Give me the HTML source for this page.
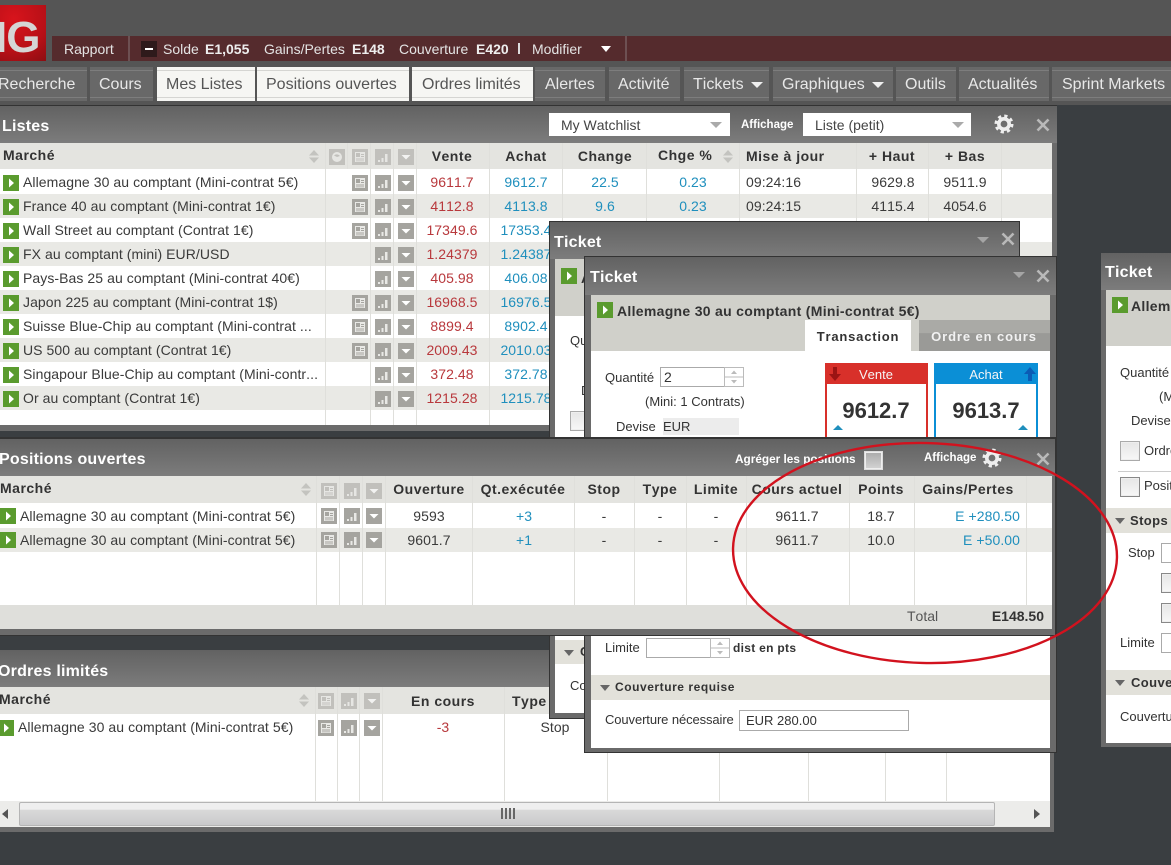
<!DOCTYPE html>
<html><head><meta charset="utf-8"><style>
html,body{margin:0;padding:0;width:1171px;height:865px;overflow:hidden;background:#3a3e41}
body{position:relative;font:13px "Liberation Sans",sans-serif;color:#333;font-kerning:none}
.b{position:absolute}
.t{position:absolute;line-height:16px;white-space:nowrap}
.c{transform:translateX(-50%)}
.r{transform:translateX(-100%)}
.m{font-size:14px;letter-spacing:.07px;color:#3a3a3a}
.h{font-weight:bold;font-size:14px;letter-spacing:.5px;color:#333}
.tt{font-weight:bold;font-size:16px;color:#fff;letter-spacing:.2px;margin-top:4px}
.n{font-size:16px;color:#e8e8e8;margin-top:1px}
.nb{position:absolute;top:67px;height:34px;background:#686868}
.nb:before,.nb:after{content:"";position:absolute;left:0;right:0;height:1px;background:#7d7d7d}
.nb:before{top:3px}.nb:after{bottom:3px}
.na{position:absolute;top:67px;height:34px;background:#f6f6f3}
.na:before,.na:after{content:"";position:absolute;left:0;right:0;height:1px;background:#d5d5d2}
.na:before{top:3px}.na:after{bottom:3px}
.tb{background:linear-gradient(#626262,#7c7c7c)}
.v{position:absolute;width:1px;background:#dfdfdb}
.m.red,.red{color:#b8383c}.m.blue,.blue{color:#1f8fbd}
.i{position:absolute;width:16px;height:16px;overflow:visible}
.l{opacity:.55}
.in{position:absolute;border:1px solid #aaa;background:#fff;box-sizing:border-box}
.cb{position:absolute;border:1px solid #aaa;background:linear-gradient(#e6e6e6,#f7f7f7);box-shadow:inset 0 0 0 1px #eee;box-sizing:border-box}
.tri{position:absolute;width:0;height:0;border-left:5px solid transparent;border-right:5px solid transparent;border-top:6px solid #666}
</style></head><body>
<svg width="0" height="0" style="position:absolute"><defs>
<symbol id="play" viewBox="0 0 16 16"><rect width="16" height="16" fill="#5a9b2e"/><path d="M6 3.500L11 8L6 12.500Z" fill="#fff"/></symbol>
<symbol id="news" viewBox="0 0 16 16"><rect width="16" height="16" fill="#a5a49f"/><path d="M3 3H13V13H3Z M4 4V8H8V4Z M9 5H12V6H9Z M9 7H12V8H9Z M4 9.500H12V10.500H4Z M4 11.500H12V12.300H4Z" fill="#e9e9e6" fill-rule="evenodd"/></symbol>
<symbol id="bars" viewBox="0 0 16 16"><rect width="16" height="16" fill="#a5a49f"/><path d="M3 11H5V13H3Z M6.500 9H8.500V13H6.500Z M10 5H12.500V13H10Z" fill="#e9e9e6"/></symbol>
<symbol id="drop" viewBox="0 0 16 16"><rect width="16" height="16" fill="#a5a49f"/><path d="M3.500 6H12.500L8 10.500Z" fill="#fff"/></symbol>
<symbol id="clk" viewBox="0 0 16 16"><rect width="16" height="16" fill="#a5a49f"/><circle cx="8" cy="8" r="5" fill="#e9e9e6"/><path d="M5 6.500A4 4 0 0 1 11 7L8 8Z" fill="#a5a49f"/></symbol>
<symbol id="sort" viewBox="0 0 12 15"><path d="M1 6.500L6 1L11 6.500Z M1 8.500H11L6 14Z" fill="#c3c3bf"/></symbol>
<symbol id="gear" viewBox="0 0 20 20"><circle cx="10" cy="10" r="5.200" fill="none" stroke="#eee" stroke-width="3.600"/><circle cx="10" cy="10" r="8" fill="none" stroke="#eee" stroke-width="3" stroke-dasharray="3.200 3.083"/></symbol>
<symbol id="x" viewBox="0 0 14 14"><path d="M1.500 1.500L12.500 12.500M12.500 1.500L1.500 12.500" stroke="#b9b9b9" stroke-width="2.600" fill="none"/></symbol>
<symbol id="spin" viewBox="0 0 20 20"><rect x=".5" y=".5" width="19" height="19" fill="#fff" stroke="#bbb"/><path d="M.5 10H19.500" stroke="#bbb"/><path d="M7 7L10 3.500L13 7Z M7 13H13L10 16.500Z" fill="#bbb"/></symbol>
</defs></svg>

<!-- HEADER -->
<div class="b" style="left:0;top:0;width:1171px;height:105px;background:#555"></div>
<div class="b" style="left:0;top:5px;width:46px;height:56px;overflow:hidden;background:radial-gradient(circle at 30% 25%,#d8141c,#b81017 60%,#8c0d12)"><div class="t" style="left:-5px;top:8px;line-height:50px;font-size:44px;font-weight:bold;color:#d5d5d5;letter-spacing:-1px">IG</div></div>
<div class="b" style="left:52px;top:36px;width:1119px;height:25px;background:#552b2d"></div>
<div class="b" style="left:128px;top:36px;width:2px;height:25px;background:#6d5052"></div>
<div class="b" style="left:625px;top:36px;width:2px;height:25px;background:#6d5052"></div>
<div class="t" style="left:64px;top:41px;font-size:14px;color:#e4e4e4">Rapport</div>
<div class="b" style="left:141px;top:41px;width:16px;height:16px;background:#2e1a1b"></div>
<div class="b" style="left:145px;top:48px;width:8px;height:2px;background:#fff"></div>
<div class="t" style="left:163px;top:41px;font-size:14px;color:#e4e4e4">Solde</div>
<div class="t" style="left:205px;top:41px;font-size:14px;font-weight:bold;color:#eee">E1,055</div>
<div class="t" style="left:264px;top:41px;font-size:14px;color:#e4e4e4">Gains/Pertes</div>
<div class="t" style="left:352px;top:41px;font-size:14px;font-weight:bold;color:#eee">E148</div>
<div class="t" style="left:399px;top:41px;font-size:14px;color:#e4e4e4">Couverture</div>
<div class="t" style="left:476px;top:41px;font-size:14px;font-weight:bold;color:#eee">E420</div>
<div class="b" style="left:518px;top:43px;width:2px;height:11px;background:#ddd"></div>
<div class="t" style="left:532px;top:41px;font-size:14px;color:#e4e4e4">Modifier</div>
<div class="tri" style="left:601px;top:46px;border-top-color:#fff"></div>

<div class="nb" style="left:-5px;width:92px"></div><div class="t n" style="left:-2px;top:76px">Recherche</div>
<div class="nb" style="left:90px;width:63px"></div><div class="t n" style="left:99px;top:76px">Cours</div>
<div class="na" style="left:157px;width:98px"></div><div class="t n" style="left:166px;top:76px;color:#555">Mes Listes</div>
<div class="na" style="left:257px;width:152px"></div><div class="t n" style="left:266px;top:76px;color:#555">Positions ouvertes</div>
<div class="na" style="left:412px;width:121px"></div><div class="t n" style="left:422px;top:76px;color:#555">Ordres limités</div>
<div class="nb" style="left:535px;width:70px"></div><div class="t n" style="left:545px;top:76px">Alertes</div>
<div class="nb" style="left:609px;width:71px"></div><div class="t n" style="left:618px;top:76px">Activité</div>
<div class="nb" style="left:684px;width:85px"></div><div class="t n" style="left:693px;top:76px">Tickets</div><div class="tri" style="left:751px;top:82px;border-top-color:#eee;border-left-width:6px;border-right-width:6px"></div>
<div class="nb" style="left:773px;width:120px"></div><div class="t n" style="left:782px;top:76px">Graphiques</div><div class="tri" style="left:872px;top:82px;border-top-color:#eee;border-left-width:6px;border-right-width:6px"></div>
<div class="nb" style="left:896px;width:60px"></div><div class="t n" style="left:905px;top:76px">Outils</div>
<div class="nb" style="left:959px;width:90px"></div><div class="t n" style="left:968px;top:76px">Actualités</div>
<div class="nb" style="left:1052px;width:125px"></div><div class="t n" style="left:1062px;top:76px">Sprint Markets</div>

<!-- LISTES WINDOW -->
<div class="b" style="left:0;top:105px;width:1057px;height:1px;background:#333"></div>
<div class="b tb" style="left:0;top:106px;width:1057px;height:37px"></div>
<div class="b" style="left:0;top:143px;width:1057px;height:288px;background:#6b6b6b"></div>
<div class="b" style="left:0;top:143px;width:1052px;height:282px;background:#fff"></div>
<div class="b" style="left:0;top:143px;width:1052px;height:26px;background:#e4e4e0"></div>
<div class="b" style="left:0;top:194px;width:1052px;height:24px;background:#e9e9e5"></div>
<div class="b" style="left:0;top:242px;width:1052px;height:24px;background:#e9e9e5"></div>
<div class="b" style="left:0;top:290px;width:1052px;height:24px;background:#e9e9e5"></div>
<div class="b" style="left:0;top:338px;width:1052px;height:24px;background:#e9e9e5"></div>
<div class="b" style="left:0;top:386px;width:1052px;height:24px;background:#e9e9e5"></div>
<div class="v" style="left:325px;top:143px;height:282px"></div>
<div class="v" style="left:347px;top:143px;height:26px"></div>
<div class="v" style="left:370px;top:143px;height:282px"></div>
<div class="v" style="left:393px;top:143px;height:282px"></div>
<div class="v" style="left:416px;top:143px;height:282px"></div>
<div class="v" style="left:489px;top:143px;height:282px"></div>
<div class="v" style="left:562px;top:143px;height:282px"></div>
<div class="v" style="left:646px;top:143px;height:282px"></div>
<div class="v" style="left:739px;top:143px;height:282px"></div>
<div class="v" style="left:856px;top:143px;height:282px"></div>
<div class="v" style="left:928px;top:143px;height:282px"></div>
<div class="v" style="left:1001px;top:143px;height:282px"></div>

<div class="t tt" style="left:2px;top:115px">Listes</div>
<div class="b" style="left:549px;top:113px;width:181px;height:23px;background:#fff"></div>
<div class="t" style="left:561px;top:117px;color:#444;font-size:14px">My Watchlist</div>
<div class="tri" style="left:710px;top:122px;border-top-color:#aaa;border-left-width:6px;border-right-width:6px"></div>
<div class="t" style="left:741px;top:117px;font-size:11.500px;font-weight:bold;color:#fff">Affichage</div>
<div class="b" style="left:803px;top:113px;width:168px;height:23px;background:#fff"></div>
<div class="t" style="left:815px;top:117px;color:#444;font-size:14px">Liste (petit)</div>
<div class="tri" style="left:952px;top:122px;border-top-color:#aaa;border-left-width:6px;border-right-width:6px"></div>
<svg class="i" style="left:994px;top:114px;width:20px;height:20px"><use href="#gear"/></svg>
<svg class="i" style="left:1036px;top:118px;width:14px;height:14px"><use href="#x"/></svg>

<div class="t h" style="left:3px;top:147px">Marché</div>
<svg class="i" style="left:308px;top:149px;width:12px;height:15px"><use href="#sort"/></svg>
<svg class="i l" style="left:329px;top:149px"><use href="#clk"/></svg>
<svg class="i l" style="left:352px;top:149px"><use href="#news"/></svg>
<svg class="i l" style="left:375px;top:149px"><use href="#bars"/></svg>
<svg class="i l" style="left:398px;top:149px"><use href="#drop"/></svg>
<div class="t h c" style="left:452px;top:148px">Vente</div>
<div class="t h c" style="left:526px;top:148px">Achat</div>
<div class="t h c" style="left:605px;top:148px">Change</div>
<div class="t h" style="left:658px;top:147px">Chge %</div>
<svg class="i" style="left:722px;top:149px;width:12px;height:15px"><use href="#sort"/></svg>
<div class="t h" style="left:746px;top:148px">Mise à jour</div>
<div class="t h c" style="left:892px;top:148px">+ Haut</div>
<div class="t h c" style="left:965px;top:148px">+ Bas</div>

<!-- rows -->
<svg class="i" style="left:3px;top:175px"><use href="#play"/></svg><div class="t m" style="left:23px;top:174px">Allemagne 30 au comptant (Mini-contrat 5€)</div>
<svg class="i" style="left:352px;top:175px"><use href="#news"/></svg><svg class="i" style="left:375px;top:175px"><use href="#bars"/></svg><svg class="i" style="left:398px;top:175px"><use href="#drop"/></svg>
<div class="t m c red" style="left:452px;top:174px">9611.7</div><div class="t m c blue" style="left:526px;top:174px">9612.7</div><div class="t m c blue" style="left:605px;top:174px">22.5</div><div class="t m c blue" style="left:693px;top:174px">0.23</div><div class="t m" style="left:746px;top:174px">09:24:16</div><div class="t m c" style="left:893px;top:174px">9629.8</div><div class="t m c" style="left:965px;top:174px">9511.9</div>

<svg class="i" style="left:3px;top:199px"><use href="#play"/></svg><div class="t m" style="left:23px;top:198px">France 40 au comptant (Mini-contrat 1€)</div>
<svg class="i" style="left:352px;top:199px"><use href="#news"/></svg><svg class="i" style="left:375px;top:199px"><use href="#bars"/></svg><svg class="i" style="left:398px;top:199px"><use href="#drop"/></svg>
<div class="t m c red" style="left:452px;top:198px">4112.8</div><div class="t m c blue" style="left:526px;top:198px">4113.8</div><div class="t m c blue" style="left:605px;top:198px">9.6</div><div class="t m c blue" style="left:693px;top:198px">0.23</div><div class="t m" style="left:746px;top:198px">09:24:15</div><div class="t m c" style="left:893px;top:198px">4115.4</div><div class="t m c" style="left:965px;top:198px">4054.6</div>

<svg class="i" style="left:3px;top:223px"><use href="#play"/></svg><div class="t m" style="left:23px;top:222px">Wall Street au comptant (Contrat 1€)</div>
<svg class="i" style="left:352px;top:223px"><use href="#news"/></svg><svg class="i" style="left:375px;top:223px"><use href="#bars"/></svg><svg class="i" style="left:398px;top:223px"><use href="#drop"/></svg>
<div class="t m c red" style="left:452px;top:222px">17349.6</div><div class="t m c blue" style="left:526px;top:222px">17353.4</div>

<svg class="i" style="left:3px;top:247px"><use href="#play"/></svg><div class="t m" style="left:23px;top:246px">FX au comptant (mini) EUR/USD</div>
<svg class="i" style="left:375px;top:247px"><use href="#bars"/></svg><svg class="i" style="left:398px;top:247px"><use href="#drop"/></svg>
<div class="t m c red" style="left:452px;top:246px">1.24379</div><div class="t m c blue" style="left:526px;top:246px">1.24387</div>

<svg class="i" style="left:3px;top:271px"><use href="#play"/></svg><div class="t m" style="left:23px;top:270px">Pays-Bas 25 au comptant (Mini-contrat 40€)</div>
<svg class="i" style="left:375px;top:271px"><use href="#bars"/></svg><svg class="i" style="left:398px;top:271px"><use href="#drop"/></svg>
<div class="t m c red" style="left:452px;top:270px">405.98</div><div class="t m c blue" style="left:526px;top:270px">406.08</div>

<svg class="i" style="left:3px;top:295px"><use href="#play"/></svg><div class="t m" style="left:23px;top:294px">Japon 225 au comptant (Mini-contrat 1$)</div>
<svg class="i" style="left:352px;top:295px"><use href="#news"/></svg><svg class="i" style="left:375px;top:295px"><use href="#bars"/></svg><svg class="i" style="left:398px;top:295px"><use href="#drop"/></svg>
<div class="t m c red" style="left:452px;top:294px">16968.5</div><div class="t m c blue" style="left:526px;top:294px">16976.5</div>

<svg class="i" style="left:3px;top:319px"><use href="#play"/></svg><div class="t m" style="left:23px;top:318px">Suisse Blue-Chip au comptant (Mini-contrat ...</div>
<svg class="i" style="left:352px;top:319px"><use href="#news"/></svg><svg class="i" style="left:375px;top:319px"><use href="#bars"/></svg><svg class="i" style="left:398px;top:319px"><use href="#drop"/></svg>
<div class="t m c red" style="left:452px;top:318px">8899.4</div><div class="t m c blue" style="left:526px;top:318px">8902.4</div>

<svg class="i" style="left:3px;top:343px"><use href="#play"/></svg><div class="t m" style="left:23px;top:342px">US 500 au comptant (Contrat 1€)</div>
<svg class="i" style="left:352px;top:343px"><use href="#news"/></svg><svg class="i" style="left:375px;top:343px"><use href="#bars"/></svg><svg class="i" style="left:398px;top:343px"><use href="#drop"/></svg>
<div class="t m c red" style="left:452px;top:342px">2009.43</div><div class="t m c blue" style="left:526px;top:342px">2010.03</div>

<svg class="i" style="left:3px;top:367px"><use href="#play"/></svg><div class="t m" style="left:23px;top:366px">Singapour Blue-Chip au comptant (Mini-contr...</div>
<svg class="i" style="left:375px;top:367px"><use href="#bars"/></svg><svg class="i" style="left:398px;top:367px"><use href="#drop"/></svg>
<div class="t m c red" style="left:452px;top:366px">372.48</div><div class="t m c blue" style="left:526px;top:366px">372.78</div>

<svg class="i" style="left:3px;top:391px"><use href="#play"/></svg><div class="t m" style="left:23px;top:390px">Or au comptant (Contrat 1€)</div>
<svg class="i" style="left:375px;top:391px"><use href="#bars"/></svg><svg class="i" style="left:398px;top:391px"><use href="#drop"/></svg>
<div class="t m c red" style="left:452px;top:390px">1215.28</div><div class="t m c blue" style="left:526px;top:390px">1215.78</div>

<!-- ORDRES WINDOW -->
<div class="b tb" style="left:0;top:650px;width:1054px;height:37px"></div>
<div class="b" style="left:0;top:687px;width:1054px;height:145px;background:#6b6b6b"></div>
<div class="b" style="left:0;top:687px;width:1050px;height:140px;background:#fff"></div>
<div class="b" style="left:0;top:687px;width:1050px;height:27px;background:#e4e4e0"></div>
<div class="v" style="left:315px;top:687px;height:114px"></div>
<div class="v" style="left:337px;top:687px;height:114px"></div>
<div class="v" style="left:359px;top:687px;height:114px"></div>
<div class="v" style="left:382px;top:687px;height:114px"></div>
<div class="v" style="left:504px;top:687px;height:114px"></div>
<div class="v" style="left:607px;top:750px;height:51px"></div>
<div class="v" style="left:719px;top:750px;height:51px"></div>
<div class="v" style="left:808px;top:750px;height:51px"></div>
<div class="v" style="left:885px;top:750px;height:51px"></div>
<div class="v" style="left:946px;top:750px;height:51px"></div>
<div class="t tt" style="left:-2px;top:660px">Ordres limités</div>
<div class="t h" style="left:-1px;top:691px">Marché</div>
<svg class="i" style="left:298px;top:693px;width:12px;height:15px"><use href="#sort"/></svg>
<svg class="i l" style="left:318px;top:693px"><use href="#news"/></svg>
<svg class="i l" style="left:341px;top:693px"><use href="#bars"/></svg>
<svg class="i l" style="left:364px;top:693px"><use href="#drop"/></svg>
<div class="t h c" style="left:443px;top:693px">En cours</div>
<div class="t h" style="left:512px;top:693px">Type d'ordre</div>
<svg class="i" style="left:-2px;top:720px"><use href="#play"/></svg><div class="t m" style="left:18px;top:719px">Allemagne 30 au comptant (Mini-contrat 5€)</div>
<svg class="i" style="left:318px;top:720px"><use href="#news"/></svg><svg class="i" style="left:341px;top:720px"><use href="#bars"/></svg><svg class="i" style="left:364px;top:720px"><use href="#drop"/></svg>
<div class="t m c red" style="left:443px;top:719px">-3</div><div class="t m c" style="left:555px;top:719px">Stop</div>
<div class="b" style="left:0;top:801px;width:1050px;height:26px;background:#ececea"></div>
<div class="b" style="left:19px;top:802px;width:976px;height:24px;box-sizing:border-box;border:1px solid #b5b5b5;border-radius:2px;background:linear-gradient(#efefef 0,#efefef 30%,#d9d9d9 31%,#c9c9cb 100%)"></div>
<div class="b" style="left:501px;top:808px;width:2px;height:11px;background:#666;box-shadow:4px 0 0 #666,8px 0 0 #666,12px 0 0 #666"></div>
<div class="b" style="left:2px;top:809px;width:0;height:0;border:5px solid transparent;border-left:0;border-right:6px solid #555"></div>
<div class="b" style="left:1034px;top:809px;width:0;height:0;border:5px solid transparent;border-right:0;border-left:6px solid #555"></div>

<!-- RIGHT TICKET -->
<div class="b" style="left:1101px;top:253px;width:70px;height:494px;background:#6a6a6a"></div>
<div class="b tb" style="left:1101px;top:253px;width:70px;height:37px"></div>
<div class="b" style="left:1106px;top:290px;width:65px;height:453px;background:#fff"></div>
<div class="b" style="left:1106px;top:290px;width:65px;height:56px;background:#d0d0ca"></div>
<div class="t tt" style="left:1105px;top:261px">Ticket</div>
<svg class="i" style="left:1112px;top:297px"><use href="#play"/></svg>
<div class="t" style="left:1131px;top:298px;font-size:14px;font-weight:bold;letter-spacing:.3px">Allemagne</div>
<div class="t" style="left:1120px;top:365px">Quantité</div>
<div class="t" style="left:1159px;top:389px">(Mini</div>
<div class="t" style="left:1131px;top:413px">Devise</div>
<div class="cb" style="left:1120px;top:441px;width:20px;height:20px"></div>
<div class="t" style="left:1144px;top:443px">Ordre</div>
<div class="b" style="left:1118px;top:471px;width:53px;height:1px;background:#ccc"></div>
<div class="cb" style="left:1120px;top:477px;width:20px;height:20px;border-color:#888"></div>
<div class="t" style="left:1144px;top:478px">Position</div>
<div class="b" style="left:1106px;top:508px;width:65px;height:25px;background:#e2e1da"></div>
<div class="tri" style="left:1115px;top:518px"></div>
<div class="t" style="left:1130px;top:513px;font-weight:bold;letter-spacing:.4px">Stops et</div>
<div class="t" style="left:1128px;top:545px">Stop</div>
<div class="in" style="left:1161px;top:543px;width:30px;height:20px"></div>
<div class="cb" style="left:1161px;top:573px;width:20px;height:20px;border-color:#888"></div>
<div class="cb" style="left:1161px;top:603px;width:20px;height:20px;border-color:#888"></div>
<div class="t" style="left:1120px;top:635px">Limite</div>
<div class="in" style="left:1161px;top:633px;width:30px;height:20px"></div>
<div class="b" style="left:1106px;top:670px;width:65px;height:25px;background:#e2e1da"></div>
<div class="tri" style="left:1115px;top:680px"></div>
<div class="t" style="left:1131px;top:675px;font-weight:bold;letter-spacing:.4px">Couverture</div>
<div class="t" style="left:1120px;top:709px">Couverture</div>

<!-- BACK TICKET -->
<div class="b" style="left:550px;top:222px;width:469px;height:496px;background:#6a6a6a;box-shadow:0 0 0 1px #333"></div>
<div class="b tb" style="left:550px;top:222px;width:469px;height:37px"></div>
<div class="b" style="left:555px;top:259px;width:459px;height:454px;background:#fff"></div>
<div class="b" style="left:555px;top:259px;width:459px;height:57px;background:#d0d0ca"></div>
<div class="t tt" style="left:554px;top:231px">Ticket</div>
<div class="tri" style="left:977px;top:237px;border-top-color:#a5a5a5;border-left-width:6px;border-right-width:6px"></div>
<svg class="i" style="left:1001px;top:232px;width:14px;height:14px"><use href="#x"/></svg>
<svg class="i" style="left:561px;top:268px"><use href="#play"/></svg>
<div class="t" style="left:581px;top:270px;font-size:14px;font-weight:bold">Allemagne</div>
<div class="t" style="left:570px;top:333px">Quantité</div>
<div class="t" style="left:581px;top:383px">Devise</div>
<div class="cb" style="left:570px;top:411px;width:20px;height:20px"></div>
<div class="b" style="left:555px;top:640px;width:459px;height:24px;background:#e2e1da"></div>
<div class="tri" style="left:564px;top:650px"></div>
<div class="t" style="left:580px;top:644px;font-weight:bold">Couverture</div>
<div class="t" style="left:570px;top:678px">Couverture</div>

<!-- FRONT TICKET -->
<div class="b" style="left:585px;top:257px;width:471px;height:495px;background:#6a6a6a;box-shadow:0 0 0 1px #333"></div>
<div class="b tb" style="left:585px;top:257px;width:471px;height:38px"></div>
<div class="b" style="left:591px;top:295px;width:459px;height:453px;background:#fff"></div>
<div class="b" style="left:591px;top:295px;width:459px;height:56px;background:#d0d0ca"></div>
<div class="t tt" style="left:590px;top:266px">Ticket</div>
<div class="tri" style="left:1013px;top:272px;border-top-color:#a5a5a5;border-left-width:6px;border-right-width:6px"></div>
<svg class="i" style="left:1036px;top:269px;width:14px;height:14px"><use href="#x"/></svg>
<svg class="i" style="left:597px;top:302px"><use href="#play"/></svg>
<div class="t" style="left:617px;top:303px;font-size:14px;font-weight:bold;letter-spacing:.3px">Allemagne 30 au comptant (Mini-contrat 5€)</div>
<div class="b" style="left:805px;top:320px;width:106px;height:31px;background:#fff"></div>
<div class="t c" style="left:858px;top:329px;font-weight:bold;letter-spacing:.8px">Transaction</div>
<div class="b" style="left:919px;top:320px;width:131px;height:31px;background:linear-gradient(#aaaaa6 0,#aaaaa6 42%,#9a9a97 43%)"></div>
<div class="t c" style="left:984px;top:329px;font-weight:bold;letter-spacing:.9px;color:#f2f2f2">Ordre en cours</div>

<div class="t" style="left:605px;top:370px">Quantité</div>
<div class="in" style="left:660px;top:367px;width:65px;height:20px;padding-left:3px;line-height:18px;font-size:14px">2</div>
<svg class="i" style="left:724px;top:367px;width:20px;height:20px"><use href="#spin"/></svg>
<div class="t" style="left:645px;top:394px">(Mini: 1 Contrats)</div>
<div class="t" style="left:616px;top:419px">Devise</div>
<div class="b" style="left:663px;top:418px;width:76px;height:17px;background:#ececec"></div>
<div class="t" style="left:663px;top:419px">EUR</div>

<div class="b" style="left:825px;top:363px;width:103px;height:80px;box-sizing:border-box;border:2px solid #d8302a;border-top:21px solid #d8302a;background:#fff"></div>
<div class="t c" style="left:876px;top:367px;color:#f5f5f5">Vente</div>
<svg class="i" style="left:829px;top:367px;width:12px;height:14px"><path d="M4 0H8V7H12L6 14L0 7H4Z" fill="#9b1414"/></svg>
<div class="t c" style="left:876px;top:403px;font-size:22px;font-weight:bold;line-height:16px">9612.7</div>
<div class="b" style="left:833px;top:425px;width:0;height:0;border-left:5px solid transparent;border-right:5px solid transparent;border-bottom:5px solid #1f8fbd"></div>

<div class="b" style="left:934px;top:363px;width:104px;height:80px;box-sizing:border-box;border:2px solid #0b8fd6;border-top:21px solid #0b8fd6;background:#fff"></div>
<div class="t c" style="left:986px;top:367px;color:#f5f5f5">Achat</div>
<svg class="i" style="left:1024px;top:367px;width:12px;height:14px"><path d="M6 0L12 7H8V14H4V7H0Z" fill="#0b5cb5"/></svg>
<div class="t c" style="left:986px;top:403px;font-size:22px;font-weight:bold;line-height:16px">9613.7</div>
<div class="b" style="left:1018px;top:425px;width:0;height:0;border-left:5px solid transparent;border-right:5px solid transparent;border-bottom:5px solid #1f8fbd"></div>

<div class="t" style="left:605px;top:640px">Limite</div>
<div class="in" style="left:646px;top:638px;width:65px;height:20px"></div>
<svg class="i" style="left:710px;top:638px;width:20px;height:20px"><use href="#spin"/></svg>
<div class="t" style="left:733px;top:640px;font-size:12px;font-weight:bold;letter-spacing:.3px">dist en pts</div>
<div class="b" style="left:591px;top:675px;width:459px;height:25px;background:#e2e1da"></div>
<div class="tri" style="left:600px;top:685px"></div>
<div class="t" style="left:615px;top:679px;font-size:12px;font-weight:bold;letter-spacing:.55px">Couverture requise</div>
<div class="t" style="left:605px;top:712px;letter-spacing:-.1px">Couverture nécessaire</div>
<div class="in" style="left:739px;top:710px;width:170px;height:21px;padding-left:6px;line-height:19px;font-size:13px">EUR 280.00</div>

<!-- POSITIONS WINDOW -->
<div class="b" style="left:0;top:437px;width:1056px;height:199px;background:#333"></div>
<div class="b tb" style="left:0;top:439px;width:1055px;height:37px"></div>
<div class="b" style="left:0;top:476px;width:1055px;height:159px;background:#6b6b6b"></div>
<div class="b" style="left:0;top:476px;width:1052px;height:153px;background:#fff"></div>
<div class="b" style="left:0;top:476px;width:1052px;height:27px;background:#e4e4e0"></div>
<div class="b" style="left:0;top:528px;width:1052px;height:24px;background:#e9e9e5"></div>
<div class="b" style="left:0;top:605px;width:1052px;height:24px;background:#dfdfdb"></div>
<div class="v" style="left:316px;top:476px;height:129px"></div>
<div class="v" style="left:339px;top:476px;height:129px"></div>
<div class="v" style="left:362px;top:476px;height:129px"></div>
<div class="v" style="left:385px;top:476px;height:129px"></div>
<div class="v" style="left:472px;top:476px;height:129px"></div>
<div class="v" style="left:574px;top:476px;height:129px"></div>
<div class="v" style="left:634px;top:476px;height:129px"></div>
<div class="v" style="left:686px;top:476px;height:129px"></div>
<div class="v" style="left:746px;top:476px;height:129px"></div>
<div class="v" style="left:849px;top:476px;height:129px"></div>
<div class="v" style="left:914px;top:476px;height:129px"></div>
<div class="v" style="left:1026px;top:476px;height:129px"></div>

<div class="t tt" style="left:-1px;top:448px">Positions ouvertes</div>
<div class="t" style="left:735px;top:451px;font-size:11.800px;font-weight:bold;color:#fff">Agréger les positions</div>
<div class="cb" style="left:864px;top:451px;width:19px;height:19px;border-color:#ddd;background:linear-gradient(#aaa,#d4d4d4)"></div>
<div class="t" style="left:924px;top:450px;font-size:11.500px;font-weight:bold;color:#fff">Affichage</div>
<svg class="i" style="left:982px;top:448px;width:20px;height:20px"><use href="#gear"/></svg>
<svg class="i" style="left:1036px;top:452px;width:14px;height:14px"><use href="#x"/></svg>

<div class="t h" style="left:0;top:480px">Marché</div>
<svg class="i" style="left:300px;top:482px;width:12px;height:15px"><use href="#sort"/></svg>
<svg class="i l" style="left:321px;top:483px"><use href="#news"/></svg>
<svg class="i l" style="left:344px;top:483px"><use href="#bars"/></svg>
<svg class="i l" style="left:366px;top:483px"><use href="#drop"/></svg>
<div class="t h c" style="left:429px;top:481px">Ouverture</div>
<div class="t h c" style="left:523px;top:481px">Qt.exécutée</div>
<div class="t h c" style="left:604px;top:481px">Stop</div>
<div class="t h c" style="left:660px;top:481px">Type</div>
<div class="t h c" style="left:716px;top:481px">Limite</div>
<div class="t h c" style="left:797px;top:481px">Cours actuel</div>
<div class="t h c" style="left:881px;top:481px">Points</div>
<div class="t h c" style="left:968px;top:481px">Gains/Pertes</div>

<svg class="i" style="left:0;top:508px"><use href="#play"/></svg><div class="t m" style="left:20px;top:508px">Allemagne 30 au comptant (Mini-contrat 5€)</div>
<svg class="i" style="left:321px;top:508px"><use href="#news"/></svg><svg class="i" style="left:344px;top:508px"><use href="#bars"/></svg><svg class="i" style="left:366px;top:508px"><use href="#drop"/></svg>
<div class="t m c" style="left:429px;top:508px">9593</div><div class="t m c blue" style="left:524px;top:508px">+3</div><div class="t m c" style="left:604px;top:508px">-</div><div class="t m c" style="left:660px;top:508px">-</div><div class="t m c" style="left:716px;top:508px">-</div><div class="t m c" style="left:797px;top:508px">9611.7</div><div class="t m c" style="left:881px;top:508px">18.7</div><div class="t m r blue" style="left:1020px;top:508px">E +280.50</div>

<svg class="i" style="left:0;top:532px"><use href="#play"/></svg><div class="t m" style="left:20px;top:532px">Allemagne 30 au comptant (Mini-contrat 5€)</div>
<svg class="i" style="left:321px;top:532px"><use href="#news"/></svg><svg class="i" style="left:344px;top:532px"><use href="#bars"/></svg><svg class="i" style="left:366px;top:532px"><use href="#drop"/></svg>
<div class="t m c" style="left:429px;top:532px">9601.7</div><div class="t m c blue" style="left:524px;top:532px">+1</div><div class="t m c" style="left:604px;top:532px">-</div><div class="t m c" style="left:660px;top:532px">-</div><div class="t m c" style="left:716px;top:532px">-</div><div class="t m c" style="left:797px;top:532px">9611.7</div><div class="t m c" style="left:881px;top:532px">10.0</div><div class="t m r blue" style="left:1020px;top:532px">E +50.00</div>

<div class="t" style="left:907px;top:608px;color:#555;font-size:14px">Total</div>
<div class="t r" style="left:1044px;top:608px;font-weight:bold;font-size:14px">E148.50</div>

<!-- ELLIPSE -->
<svg class="b" style="left:0;top:0" width="1171" height="865"><ellipse cx="925" cy="553" rx="192" ry="110" transform="rotate(1.500 925 553)" fill="none" stroke="#d2121e" stroke-width="2.400"/></svg>
</body></html>
